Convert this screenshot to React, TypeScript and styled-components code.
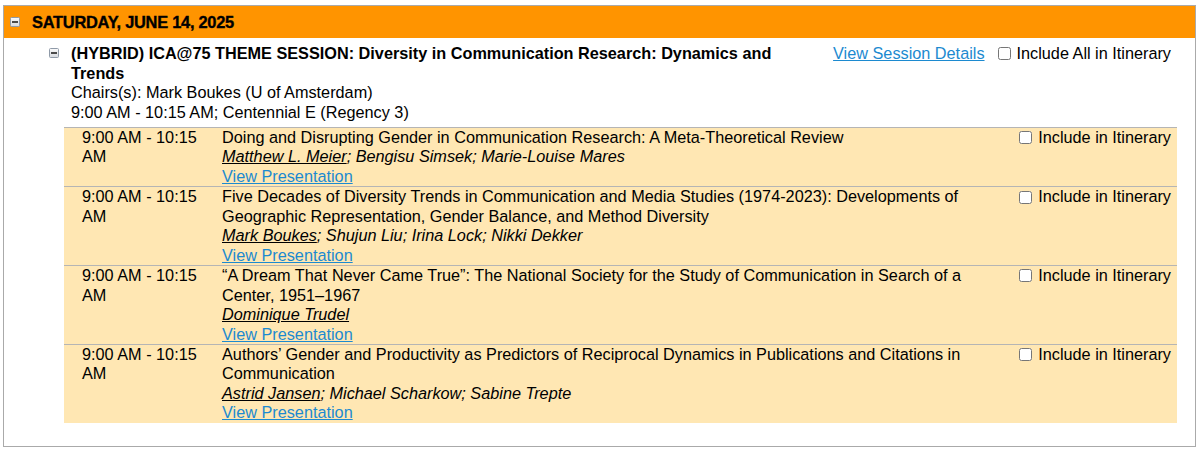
import React from 'react';
import styled, { createGlobalStyle } from 'styled-components';

const GlobalStyle = createGlobalStyle`
  body {
    margin: 0;
    background: #fff;
    font-family: "Liberation Sans", Arial, sans-serif;
    font-size: 16.25px;
    color: #000;
  }
`;

const DayBox = styled.div`
  margin: 5px 4px 0 3px;
  border: 1px solid #aaa;
`;

const DayHeader = styled.div`
  display: flex;
  align-items: center;
  gap: 12px;
  height: 32px;
  padding-left: 6px;
  background: #ff9400;
  font-weight: bold;
  font-size: 16.4px;
  letter-spacing: -0.25px;
  -webkit-text-stroke: 0.35px #000;
`;

const SessionBlock = styled.div`
  padding: 6px 18px 23px 45px;
`;

const SessionHead = styled.div`
  display: flex;
  align-items: flex-start;
  gap: 12px;
`;

const IconCell = styled.div`
  padding-top: 4px;
  width: 10px;
  flex: none;
`;

const SessionInfo = styled.div`
  flex: 1;
  line-height: 19.5px;
`;

const SessionTitle = styled.div`
  font-weight: bold;
`;

const SessionActions = styled.div`
  display: flex;
  align-items: center;
  flex: none;
  line-height: 19.5px;
  margin-right: 6px;
`;

const Link = styled.a`
  color: #1c8ad0;
  text-decoration: underline;
  cursor: pointer;
`;

const SessionLink = styled(Link)`
  margin-right: 9px;
`;

const CheckLabel = styled.label`
  display: inline-flex;
  align-items: center;
  white-space: nowrap;
`;

const Check = styled.input`
  width: 13px;
  height: 13px;
  margin: 0 6px 0 4px;
`;

const PresentationTable = styled.div`
  margin: 5px 0 0 15px;
  background: #ffe7b3;
`;

const Row = styled.div`
  display: grid;
  grid-template-columns: 158px 1fr auto;
  border-top: 1px solid #b5b5b5;
  line-height: 19.45px;
`;

const TimeCell = styled.div`
  padding: 0 18px;
`;

const TitleCell = styled.div`
  padding-right: 6px;
`;

const Authors = styled.div`
  font-style: italic;
`;

const Presenter = styled.span`
  text-decoration: underline;
`;

const ActionCell = styled.div`
  padding-right: 6px;
`;

const Collapse: React.FC = () => (
  <svg width="10" height="10" viewBox="0 0 10 10" style={{ display: 'block' }}>
    <defs>
      <linearGradient id="cg" x1="0" y1="0" x2="0" y2="1">
        <stop offset="0" stopColor="#fbfbfb" />
        <stop offset="1" stopColor="#d6d9de" />
      </linearGradient>
    </defs>
    <rect x="0.5" y="0.5" width="9" height="9" rx="1" fill="url(#cg)" stroke="#8f9aa8" />
    <rect x="2" y="4" width="6" height="2" fill="#4a4a4a" />
  </svg>
);

interface Presentation {
  title: string;
  presenter: string;
  others: string[];
}

const presentations: Presentation[] = [
  {
    title: 'Doing and Disrupting Gender in Communication Research: A Meta-Theoretical Review',
    presenter: 'Matthew L. Meier',
    others: ['Bengisu Simsek', 'Marie-Louise Mares'],
  },
  {
    title:
      'Five Decades of Diversity Trends in Communication and Media Studies (1974-2023): Developments of Geographic Representation, Gender Balance, and Method Diversity',
    presenter: 'Mark Boukes',
    others: ['Shujun Liu', 'Irina Lock', 'Nikki Dekker'],
  },
  {
    title:
      '\u201CA Dream That Never Came True\u201D: The National Society for the Study of Communication in Search of a Center, 1951\u20131967',
    presenter: 'Dominique Trudel',
    others: [],
  },
  {
    title:
      'Authors\u2019 Gender and Productivity as Predictors of Reciprocal Dynamics in Publications and Citations in Communication',
    presenter: 'Astrid Jansen',
    others: ['Michael Scharkow', 'Sabine Trepte'],
  },
];

const App: React.FC = () => (
  <>
    <GlobalStyle />
    <DayBox>
      <DayHeader>
        <Collapse />
        <span>SATURDAY, JUNE 14, 2025</span>
      </DayHeader>
      <SessionBlock>
        <SessionHead>
          <IconCell>
            <Collapse />
          </IconCell>
          <SessionInfo>
            <SessionTitle>
              (HYBRID) ICA@75 THEME SESSION: Diversity in Communication Research: Dynamics and Trends
            </SessionTitle>
            <div>Chairs(s): Mark Boukes (U of Amsterdam)</div>
            <div>9:00 AM - 10:15 AM; Centennial E (Regency 3)</div>
          </SessionInfo>
          <SessionActions>
            <SessionLink>View Session Details</SessionLink>
            <CheckLabel>
              <Check type="checkbox" />
              Include All in Itinerary
            </CheckLabel>
          </SessionActions>
        </SessionHead>
        <PresentationTable>
          {presentations.map((p) => (
            <Row key={p.presenter}>
              <TimeCell>9:00 AM - 10:15 AM</TimeCell>
              <TitleCell>
                <div>{p.title}</div>
                <Authors>
                  <Presenter>{p.presenter}</Presenter>
                  {p.others.map((o) => `; ${o}`).join('')}
                </Authors>
                <Link>View Presentation</Link>
              </TitleCell>
              <ActionCell>
                <CheckLabel>
                  <Check type="checkbox" />
                  Include in Itinerary
                </CheckLabel>
              </ActionCell>
            </Row>
          ))}
        </PresentationTable>
      </SessionBlock>
    </DayBox>
  </>
);

export default App;
